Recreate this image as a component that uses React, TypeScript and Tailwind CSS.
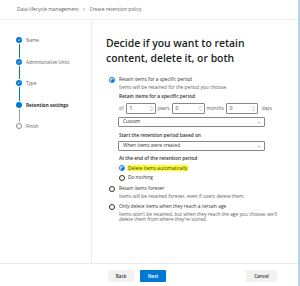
import React from "react";

const Check = () => (
  <svg width="4" height="4" viewBox="0 0 10 10" fill="none">
    <path d="M2 5.2 L4.2 7.3 L8.2 2.8" stroke="white" strokeWidth="1.6" strokeLinecap="round" strokeLinejoin="round" />
  </svg>
);

type Step = { label: string; state: "done" | "current" | "todo" };
const steps: Step[] = [
  { label: "Name", state: "done" },
  { label: "Administrative Units", state: "done" },
  { label: "Type", state: "done" },
  { label: "Retention settings", state: "current" },
  { label: "Finish", state: "todo" },
];

function Radio({ checked }: { checked?: boolean }) {
  return checked ? (
    <div className="w-[6px] h-[6px] rounded-full border-[0.8px] border-[#0078d4] flex items-center justify-center shrink-0">
      <div className="w-[3px] h-[3px] rounded-full bg-[#0078d4]" />
    </div>
  ) : (
    <div className="w-[6px] h-[6px] rounded-full border-[0.8px] border-[#323130] shrink-0" />
  );
}

function Spin({ value, w }: { value: string; w: string }) {
  return (
    <div className={`${w} h-[11px] border-[0.6px] border-[#8a8886] rounded-[1px] flex items-center justify-between pl-[3px] pr-[1.5px]`}>
      <span>{value}</span>
      <div className="flex flex-col items-center leading-none">
        <svg width="3" height="2" viewBox="0 0 6 4"><path d="M0.5 3.5 L3 1 L5.5 3.5" stroke="#605e5c" strokeWidth="0.8" fill="none" /></svg>
        <svg width="3" height="2" viewBox="0 0 6 4" className="mt-[1px]"><path d="M0.5 0.5 L3 3 L5.5 0.5" stroke="#605e5c" strokeWidth="0.8" fill="none" /></svg>
      </div>
    </div>
  );
}

function Select({ value }: { value: string }) {
  return (
    <div className="w-[147px] h-[10px] border-[0.6px] border-[#8a8886] rounded-[1px] flex items-center justify-between pl-[4px] pr-[3px]">
      <span>{value}</span>
      <svg width="4" height="3" viewBox="0 0 8 5"><path d="M0.8 0.8 L4 4 L7.2 0.8" stroke="#605e5c" strokeWidth="0.9" fill="none" /></svg>
    </div>
  );
}

export default function App() {
  return (
    <div
      className="w-[300px] h-[286px] bg-white flex flex-col overflow-hidden border-r-[2px] border-[#b7d7f0] text-[#323130]"
      style={{ fontFamily: '"Open Sans", "Noto Sans", sans-serif' }}
    >
      {/* header */}
      <div className="h-[20px] shrink-0 border-b-[0.6px] border-[#f0efee] flex items-center pl-[17px] text-[4.9px] text-[#605e5c] gap-[4px]">
        <span>Data lifecycle management</span>
        <span>&gt;</span>
        <span>Create retention policy</span>
      </div>

      {/* body */}
      <div className="flex flex-1 min-h-0">
        {/* nav */}
        <div className="w-[92px] shrink-0 border-r-[0.6px] border-[#edebe9] pl-[16px] pt-[17px] flex flex-col">
          {steps.map((s, i) => (
            <div key={s.label} className="flex gap-[4px] h-[21.5px]">
              <div className="w-[6px] flex flex-col items-center">
                {s.state === "done" && (
                  <div className="w-[6px] h-[6px] rounded-full bg-[#0078d4] flex items-center justify-center shrink-0">
                    <Check />
                  </div>
                )}
                {s.state === "current" && (
                  <div className="w-[6px] h-[6px] rounded-full bg-[#0078d4] shrink-0" />
                )}
                {s.state === "todo" && (
                  <div className="w-[6px] h-[6px] rounded-full border-[0.7px] border-[#8a8886] shrink-0" />
                )}
                {i < steps.length - 1 && (
                  <div
                    className={`w-[0.8px] flex-1 my-[1px] ${
                      s.state === "done" ? "bg-[#0078d4]" : "bg-[#a19f9d]"
                    }`}
                  />
                )}
              </div>
              <div
                className={`text-[4.6px] leading-[6px] ${
                  s.state === "current" ? "font-bold text-[#323130]" : "text-[#605e5c]"
                }`}
              >
                {s.label}
              </div>
            </div>
          ))}
        </div>

        {/* content */}
        <div className="flex-1 pl-[14px] pt-[16px] text-[4.8px]">
          <h1 className="text-[10.4px] leading-[15px] font-semibold text-[#201f1e]">
            Decide if you want to retain
            <br />
            content, delete it, or both
          </h1>

          <div className="ml-[3px] mt-[11px] flex flex-col">
            <div className="flex items-center gap-[4px] h-[6px]">
              <Radio checked />
              <span>Retain items for a specific period</span>
            </div>
            <div className="pl-[10px] text-[#605e5c] leading-[6px] mt-[1px]">
              Items will be retained for the period you choose.
            </div>

            <div className="pl-[10px] flex flex-col">
              <div className="font-semibold leading-[6px] mt-[3px]">Retain items for a specific period</div>
              <div className="flex items-center gap-[2px] mt-[4px]">
                <span className="text-[#605e5c]">of</span>
                <Spin value="1" w="w-[30px]" />
                <span className="text-[#605e5c]">years</span>
                <Spin value="0" w="w-[33px]" />
                <span className="text-[#605e5c]">months</span>
                <Spin value="0" w="w-[32px]" />
                <span className="text-[#605e5c] ml-[2px]">days</span>
              </div>
              <div className="mt-[3px] -ml-[1px]">
                <Select value="Custom" />
              </div>

              <div className="font-semibold leading-[6px] mt-[5px]">Start the retention period based on</div>
              <div className="mt-[3px] -ml-[1px]">
                <Select value="When items were created" />
              </div>

              <div className="font-semibold leading-[6px] mt-[4px]">At the end of the retention period</div>
              <div className="flex items-center gap-[2px] h-[6px] mt-[4px]">
                <Radio checked />
                <span className="bg-[#ffff29] px-[1px] leading-[6px]">Delete items automatically</span>
              </div>
              <div className="flex items-center gap-[3px] h-[6px] mt-[4px]">
                <Radio />
                <span>Do nothing</span>
              </div>
            </div>

            <div className="flex items-center gap-[4px] h-[6px] mt-[5px]">
              <Radio />
              <span>Retain items forever</span>
            </div>
            <div className="pl-[10px] text-[#605e5c] leading-[6px] mt-[1px]">
              Items will be retained forever, even if users delete them.
            </div>

            <div className="flex items-center gap-[4px] h-[6px] mt-[5px]">
              <Radio />
              <span>Only delete items when they reach a certain age</span>
            </div>
            <div className="pl-[10px] text-[#605e5c] leading-[5px] mt-[1.5px]">
              Items won't be retained, but when they reach the age you choose, we'll
              <br />
              delete them from where they're stored.
            </div>
          </div>
        </div>
      </div>

      {/* footer */}
      <div className="h-[23px] shrink-0 border-t-[0.6px] border-[#edebe9] flex items-start pt-[6px] pl-[108px] pr-[21px] gap-[6px] text-[4.6px] font-semibold">
        <button className="w-[26px] h-[12px] bg-[#f3f2f1] rounded-[1px] text-[#323130]">Back</button>
        <button className="w-[26px] h-[12px] bg-[#0078d4] rounded-[1px] text-white">Next</button>
        <button className="ml-auto w-[31px] h-[12px] bg-[#f3f2f1] rounded-[1px] text-[#323130]">Cancel</button>
      </div>
    </div>
  );
}
